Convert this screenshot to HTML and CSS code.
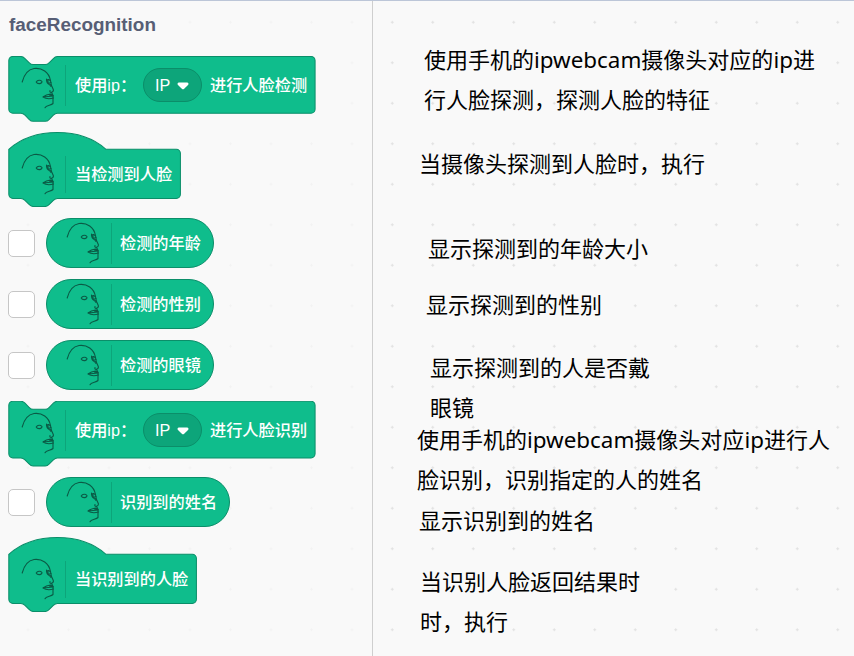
FILE: index.html
```
<!DOCTYPE html>
<html lang="zh-CN">
<head>
<meta charset="utf-8">
<title>faceRecognition</title>
<link rel="stylesheet" href="styles.css">
</head>
<body>
<svg class="defs" aria-hidden="true">
  <symbol id="face" viewBox="0 0 40 48">
    <g fill="none" stroke="#0b5a45" stroke-width="1.100" stroke-linejoin="round" stroke-linecap="round">
      <path d="M5.200 18C7 11 11 5.500 17 4.500C25 3.500 32 8 33.500 16.500L34.500 21.500L36.300 25.500C36.700 27 35.500 28 34.500 28.300C33 28.500 32.500 27.500 33 26.500M34.500 28.300L36 31.500V39.500C34 41.500 29 41 28 43.800"/>
      <path d="M19.200 18C20.500 15.800 23.500 15.800 25 17.500C25 20 20.500 20.500 19.200 18ZM29.500 15C29.500 19 31 20.500 33.500 20.500M29.500 16.500C31 15 32.500 15.500 33.300 17M31 16V19.500L34 18.500M36 31.500L33.500 30C30 30.500 28 31.500 26 33C29 35 33 35 36.500 34M26 33L36.300 32M32.500 31L36 31.500M32 19.800L34 22.500"/>
    </g>
  </symbol>
  <symbol id="caret" viewBox="0 0 12 8"><path fill="#fff" d="M2 .5H10C11.500 .5 12 2 11 3L7.200 6.700Q6 7.800 4.800 6.700L1 3C0 2 .5 .5 2 .5Z"/></symbol>
</svg>
<div class="app">
  <aside class="palette">
    <h1 class="title">faceRecognition</h1>
    <div class="block stack">
      <svg class="shape" width="308" height="67"><path transform="translate(.8 .5) scale(1.0125)" d="M0 4A4 4 0 0 1 4 0H12c2 0 3 1 4 2l4 4c1 1 2 2 4 2h12c2 0 3-1 4-2l4-4c1-1 2-2 4-2H298.500a4 4 0 0 1 4 4V52a4 4 0 0 1-4 4H48c-2 0-3 1-4 2l-4 4c-1 1-2 2-4 2H24c-2 0-3-1-4-2l-4-4c-1-1-2-2-4-2H4a4 4 0 0 1-4-4Z"/></svg>
      <div class="content"><svg class="face"><use href="#face"/></svg><i class="rule"></i><span class="label arg">使用ip：</span><span class="menu">IP<svg class="caret"><use href="#caret"/></svg></span><span class="label">进行人脸检测</span></div>
    </div>
    <div class="block hat">
      <svg class="shape" width="190" height="75"><path transform="translate(.8 17.300) scale(1.0125)" d="M0 0C25-22 71-22 96 0H165.500a4 4 0 0 1 4 4V44.500a4 4 0 0 1-4 4H48c-2 0-3 1-4 2l-4 4c-1 1-2 2-4 2H24c-2 0-3-1-4-2l-4-4c-1-1-2-2-4-2H4a4 4 0 0 1-4-4Z"/></svg>
      <div class="content"><svg class="face"><use href="#face"/></svg><i class="rule"></i><span class="label">当检测到人脸</span></div>
    </div>
    <div class="row"><span class="check"></span><div class="reporter"><svg class="face"><use href="#face"/></svg><i class="rule"></i><span class="label">检测的年龄</span></div></div>
    <div class="row"><span class="check"></span><div class="reporter"><svg class="face"><use href="#face"/></svg><i class="rule"></i><span class="label">检测的性别</span></div></div>
    <div class="row"><span class="check"></span><div class="reporter"><svg class="face"><use href="#face"/></svg><i class="rule"></i><span class="label">检测的眼镜</span></div></div>
    <div class="block stack">
      <svg class="shape" width="308" height="67"><path transform="translate(.8 .2) scale(1.0125)" d="M0 4A4 4 0 0 1 4 0H12c2 0 3 1 4 2l4 4c1 1 2 2 4 2h12c2 0 3-1 4-2l4-4c1-1 2-2 4-2H298.500a4 4 0 0 1 4 4V52a4 4 0 0 1-4 4H48c-2 0-3 1-4 2l-4 4c-1 1-2 2-4 2H24c-2 0-3-1-4-2l-4-4c-1-1-2-2-4-2H4a4 4 0 0 1-4-4Z"/></svg>
      <div class="content"><svg class="face"><use href="#face"/></svg><i class="rule"></i><span class="label arg">使用ip：</span><span class="menu">IP<svg class="caret"><use href="#caret"/></svg></span><span class="label">进行人脸识别</span></div>
    </div>
    <div class="row row-name"><span class="check"></span><div class="reporter wide"><svg class="face"><use href="#face"/></svg><i class="rule"></i><span class="label">识别到的姓名</span></div></div>
    <div class="block hat">
      <svg class="shape" width="190" height="75"><path transform="translate(.8 17.300) scale(1.0125)" d="M0 0C25-22 71-22 96 0H181.300a4 4 0 0 1 4 4V44.500a4 4 0 0 1-4 4H48c-2 0-3 1-4 2l-4 4c-1 1-2 2-4 2H24c-2 0-3-1-4-2l-4-4c-1-1-2-2-4-2H4a4 4 0 0 1-4-4Z"/></svg>
      <div class="content"><svg class="face"><use href="#face"/></svg><i class="rule"></i><span class="label">当识别到的人脸</span></div>
    </div>
  </aside>
  <main class="workspace">
    <p class="note n1">使用手机的<span class="latin">ipwebcam</span>摄像头对应的<span class="latin">ip</span>进<br>行人脸探测，探测人脸的特征</p>
    <p class="note n2">当摄像头探测到人脸时，执行</p>
    <p class="note n3">显示探测到的年龄大小</p>
    <p class="note n4">显示探测到的性别</p>
    <p class="note n5">显示探测到的人是否戴<br>眼镜</p>
    <p class="note n6">使用手机的<span class="latin">ipwebcam</span>摄像头对应<span class="latin">ip</span>进行人<br>脸识别，识别指定的人的姓名</p>
    <p class="note n7">显示识别到的姓名</p>
    <p class="note n8">当识别人脸返回结果时<br>时，执行</p>
  </main>
</div>
</body>
</html>
```
FILE: styles.css
```
* { box-sizing: border-box; }
body { margin: 0; background: #f9f9f9; }
.defs { display: none; }
.app { display: flex; width: 854px; height: 656px; overflow: hidden; border-top: 1px solid #bcc6d8; }
.palette { width: 373px; flex: none; padding-left: 8px; border-right: 1px solid #cfcfcf; background: radial-gradient(circle, #f3f3f3 1px, transparent 1.400px) 7.750px 1px / 40.500px 40.500px; }
.title { margin: 0; padding: 13px 0 0 1px; height: 55px; font: bold 18.900px/22px "Liberation Sans", sans-serif; color: #575e75; }
.block { display: grid; width: max-content; }
.block > * { grid-area: 1 / 1; }
.shape { display: block; }
.shape path { fill: #0fbd8c; stroke: #0b8e69; stroke-width: 1; }
.stack { height: 76px; }
.hat { height: 86px; }
.stack .content { height: 58px; }
.hat .content { height: 50px; margin-top: 17px; }
.content { display: flex; align-items: center; padding-left: 9px; }
.face { width: 40px; height: 48px; flex: none; margin-right: 8px; }
.stack .face { margin-top: 6px; }
.rule { width: 1px; height: 41px; background: #0da57a; margin-right: 9px; flex: none; }
.hat .rule { height: 37px; }
.label { font: 500 16.200px/24px "Liberation Sans", "Noto Sans CJK SC", sans-serif; color: #fff; white-space: nowrap; }
.arg { width: 68px; }
.menu { display: flex; align-items: center; width: 59px; height: 34px; margin-right: 8px; padding-left: 11px; border: 1px solid #0b8e69; border-radius: 17px; background: #0da57a; color: #fff; font: 16.200px/24px "Liberation Sans", sans-serif; }
.caret { width: 12px; height: 8px; margin: 2px 0 0 7px; }
.row { display: flex; align-items: center; gap: 11px; height: 50px; margin-bottom: 11px; }
.row-name { margin-bottom: 10px; }
.check { width: 27px; height: 27px; border: 1px solid #c6c6c6; border-radius: 5px; background: #fff; }
.reporter { display: flex; align-items: center; width: 168px; height: 50px; padding-left: 15px; border: 1px solid #0b8e69; border-radius: 25px; background: #0fbd8c; }
.reporter .face { margin-right: 9px; }
.reporter .rule { margin-right: 8px; }
.wide { width: 184px; }
.workspace { flex: 1; background: radial-gradient(circle, #e2e2e2 1px, transparent 1.400px) -1px 1px / 40.500px 40.500px; }
.note { margin: 0; color: #000; white-space: nowrap; font: 22px/40px "Noto Sans CJK SC", sans-serif; }
.latin { font: 22.400px/1 "Noto Sans", sans-serif; }
.n1 { padding: 37px 0 0 51px; }
.n2 { padding: 24px 0 0 46px; }
.n3 { padding: 45px 0 0 55px; }
.n4 { padding: 16px 0 0 53px; }
.n5 { padding: 23px 0 0 57px; }
.n6 { margin-top: -8px; padding-left: 44px; }
.n7 { padding: 1px 0 0 46px; }
.n8 { padding: 21px 0 0 47px; }
```
